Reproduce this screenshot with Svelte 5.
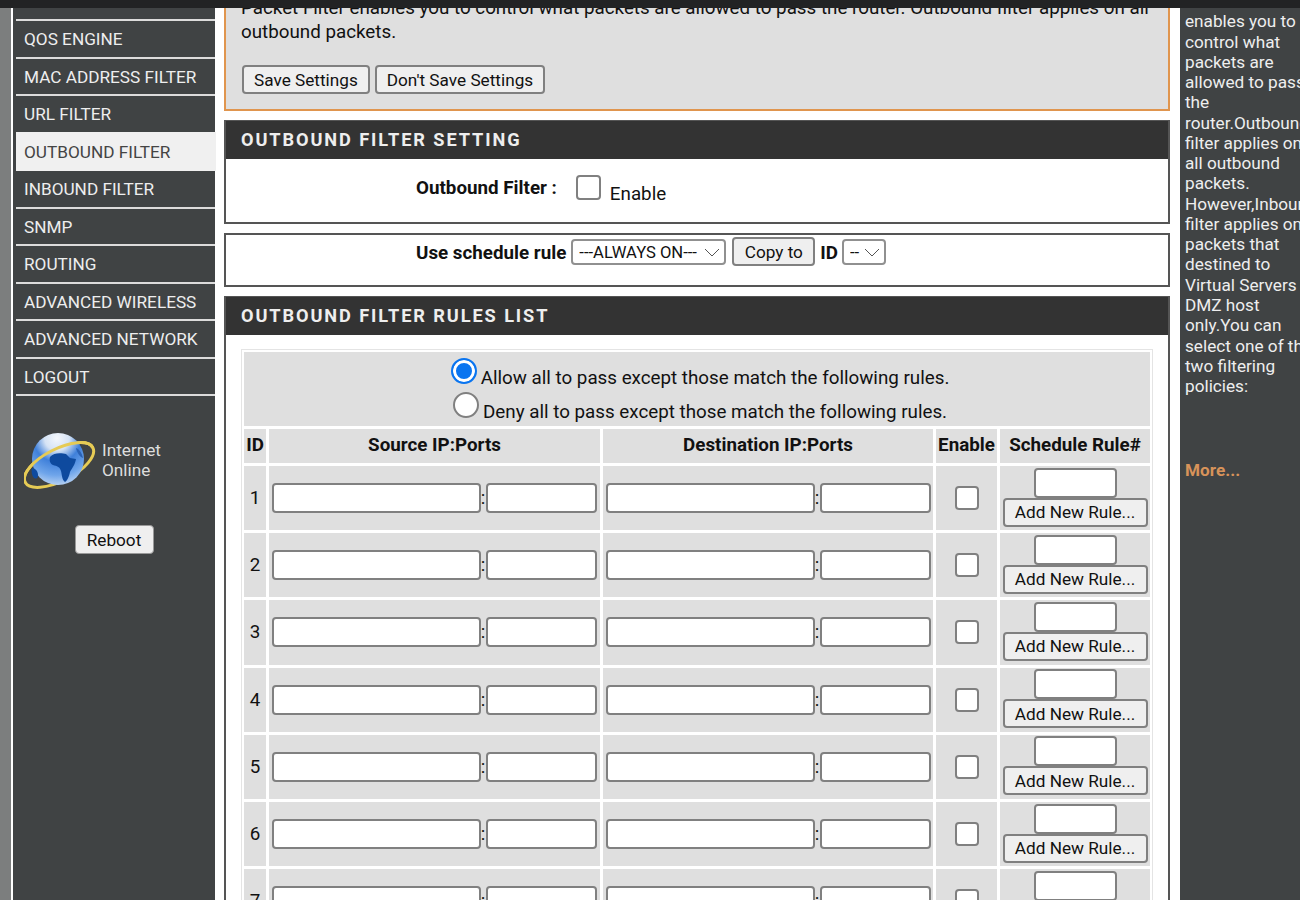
<script>
  const menu = ['', 'QOS ENGINE', 'MAC ADDRESS FILTER', 'URL FILTER', 'OUTBOUND FILTER', 'INBOUND FILTER', 'SNMP', 'ROUTING', 'ADVANCED WIRELESS', 'ADVANCED NETWORK', 'LOGOUT'];
  const rows = [1, 2, 3, 4, 5, 6, 7];
</script>

<div class="topbar"></div>
<div class="page">
  <div class="strip"></div>
  <nav class="sidebar">
    <ul class="menu">
      {#each menu as item}
        <li class:active={item === 'OUTBOUND FILTER'}>{item}</li>
      {/each}
    </ul>
    <div class="status">
      <svg class="globe" width="72" height="64" viewBox="0 0 72 64">
        <defs>
          <radialGradient id="sea" cx="0.48" cy="0.1" r="0.95">
            <stop offset="0" stop-color="#f4f7fb" />
            <stop offset="0.25" stop-color="#d5e3f5" />
            <stop offset="0.48" stop-color="#3f80da" />
            <stop offset="0.75" stop-color="#6fa5ea" />
            <stop offset="1" stop-color="#c5daf5" />
          </radialGradient>
          <clipPath id="upper">
            <rect x="-10" y="-10" width="100" height="43" />
          </clipPath>
        </defs>
        <g transform="rotate(-27 35 33)">
          <ellipse cx="35" cy="33" rx="38" ry="16" fill="none" stroke="#e6cb55" stroke-width="3" />
        </g>
        <circle cx="34" cy="27" r="26" fill="url(#sea)" />
        <path d="M26 25C30 20 38 21 42 22L46 26 52 27C51 33 48 36 46 40 45 45 43 49 41 50 38 48 38 43 37 39 36 35 33 34 29 33 26 32 25 28 26 25z" fill="#0e4a9e" />
        <path d="M8 36c3 0 6 3 6 7s-2 4-4 3c-2-2-3-6-2-10z" fill="#0e4a9e" />
        <path d="M52 16c3 1 6 5 7 10-3-1-6-5-7-10z" fill="#2a62b5" />
        <g transform="rotate(-27 35 33)">
          <ellipse cx="35" cy="33" rx="38" ry="16" fill="none" stroke="#e6cb55" stroke-width="3" clip-path="url(#upper)" />
        </g>
      </svg>
      <div class="online">Internet<br />Online</div>
    </div>
    <div class="reboot"><button>Reboot</button></div>
  </nav>

  <main class="content">
    <section class="intro">
      <p>Packet Filter enables you to control what packets are allowed to pass the router. Outbound filter applies on all outbound packets.</p>
      <div class="actions">
        <button>Save Settings</button>
        <button>Don't Save Settings</button>
      </div>
    </section>

    <section class="box">
      <h2>OUTBOUND FILTER SETTING</h2>
      <div class="setting">
        <b class="setting-label">Outbound Filter :</b>
        <input type="checkbox" class="check" />
        <span class="enable-text">Enable</span>
      </div>
    </section>

    <section class="box schedule">
      <b>Use schedule rule</b>
      <select class="sel-always"><option>---ALWAYS ON---</option></select>
      <button class="copy">Copy to</button>
      <b>ID</b>
      <select class="sel-id"><option>--</option></select>
    </section>

    <section class="box rules">
      <h2>OUTBOUND FILTER RULES LIST</h2>
      <div class="rules-body">
        <table>
          <colgroup>
            <col class="c-id" />
            <col class="c-src" />
            <col class="c-dst" />
            <col class="c-en" />
            <col class="c-sch" />
          </colgroup>
          <thead>
            <tr>
              <td colspan="5" class="policy">
                <div class="policy-line"><input type="radio" name="policy" checked /><span>Allow all to pass except those match the following rules.</span></div>
                <div class="policy-line"><input type="radio" name="policy" /><span>Deny all to pass except those match the following rules.</span></div>
              </td>
            </tr>
            <tr class="head">
              <th>ID</th>
              <th>Source IP:Ports</th>
              <th>Destination IP:Ports</th>
              <th>Enable</th>
              <th>Schedule Rule#</th>
            </tr>
          </thead>
          <tbody>
            {#each rows as n}
              <tr>
                <td class="num">{n}</td>
                <td><div class="ip"><input class="addr" type="text" /><span>:</span><input class="port" type="text" /></div></td>
                <td><div class="ip"><input class="addr" type="text" /><span>:</span><input class="port" type="text" /></div></td>
                <td class="center"><input type="checkbox" class="check" /></td>
                <td class="center sched">
                  <input class="sched-input" type="text" />
                  <button class="add">Add New Rule...</button>
                </td>
              </tr>
            {/each}
          </tbody>
        </table>
      </div>
    </section>
  </main>

  <aside class="hints">
    <p>Packet Filter enables you to control what packets are allowed to pass the router.Outbound filter applies on all&nbsp;outbound packets. However,Inbound filter applies on packets that destined to Virtual&nbsp;Servers&nbsp;or DMZ host only.You&nbsp;can select one of the two filtering policies:</p>
    <a class="more" href="#more">More...</a>
  </aside>
</div>

<style>
  :global(body) {
    margin: 0;
    background: #fff;
    overflow: hidden;
    font-family: Roboto, "Liberation Sans", sans-serif;
    color: #111;
  }

  .topbar {
    height: 8px;
    background: #222324;
  }

  .page {
    display: flex;
    height: 892px;
    overflow: hidden;
    background: #fff;
  }

  .strip {
    width: 11px;
    flex: none;
    background: #7c7e7e;
    margin-right: 2px;
  }

  .sidebar {
    width: 202px;
    flex: none;
    background: #404344;
    color: #eee;
  }

  .menu {
    list-style: none;
    margin: 0 0 0 3px;
    padding: 0;
    font-size: 17.2px;
  }

  .menu li {
    height: 35.5px;
    line-height: 37px;
    padding-left: 8px;
    border-bottom: 2px solid #dcdcdc;
    white-space: nowrap;
  }

  .menu li:first-child {
    height: 11px;
    line-height: 11px;
  }

  .menu li.active {
    background: #f0f0f0;
    color: #444;
    margin-right: -1px;
    margin-top: -2px;
    padding-top: 2px;
    border-bottom-color: #f0f0f0;
  }

  .status {
    display: flex;
    align-items: center;
    margin: 36px 0 0 11px;
  }

  .globe {
    flex: none;
    margin-right: 6px;
  }

  .online {
    font-size: 17.2px;
    line-height: 20.3px;
    color: #ddd;
    margin-top: -8px;
  }

  .reboot {
    text-align: center;
    margin: 29px 0 0 0;
  }

  .reboot button {
    width: 79px;
    height: 29px;
    padding: 0;
    border: 1px solid #999;
    background: #efefef;
  }

  .content {
    width: 946px;
    flex: none;
    margin: -12px 9px 0;
  }

  button {
    font-family: inherit;
    font-size: 17.2px;
    color: #111;
    background: #efefef;
    border: 2px solid #808080;
    border-radius: 4px;
    padding: 0 10px;
    height: 29px;
  }

  .intro {
    box-sizing: border-box;
    height: 115px;
    padding: 0 15px;
    background: #dfdfdf;
    border: 2px solid #e0954e;
    border-top: none;
    font-size: 18.8px;
    line-height: 24px;
  }

  .intro p {
    margin: 0;
  }

  .actions {
    display: flex;
    gap: 5px;
    margin: 21px 0 0 1px;
  }

  .box {
    box-sizing: border-box;
    margin-top: 9px;
    border: 2px solid #555;
    background: #fff;
  }

  h2 {
    margin: -1px 0 0;
    height: 38px;
    line-height: 38px;
    padding-left: 15px;
    background: #333;
    color: #eee;
    font-size: 18.2px;
    font-weight: 700;
    letter-spacing: 1.9px;
  }

  .setting {
    height: 63px;
    display: flex;
    align-items: flex-start;
    font-size: 18.8px;
  }

  .setting-label {
    margin: 18px 0 0 190px;
  }

  .setting .check {
    margin: 16px 0 0 19px;
  }

  .enable-text {
    margin: 24px 0 0 9px;
  }

  .check {
    appearance: none;
    width: 25px;
    height: 25px;
    margin: 0;
    background: #fff;
    border: 2px solid #808080;
    border-radius: 4px;
    box-sizing: border-box;
  }

  .schedule {
    height: 54px;
    display: flex;
    align-items: flex-start;
    gap: 5px;
    padding: 2px 0 0 190px;
    font-size: 18.8px;
  }

  .schedule b {
    margin-top: 5px;
  }

  .schedule select {
    margin-top: 2px;
  }

  .copy {
    width: 83px;
    padding: 0;
    margin-left: 1px;
  }

  select {
    appearance: none;
    font-family: inherit;
    font-size: 16.6px;
    color: #111;
    height: 26px;
    border: 2px solid #909090;
    border-radius: 4px;
    padding: 0 0 0 6px;
    background-color: #fff;
    background-image: linear-gradient(45deg, transparent 46%, #555 46%, #555 54%, transparent 54%), linear-gradient(-45deg, transparent 46%, #555 46%, #555 54%, transparent 54%);
    background-size: 7px 7px, 7px 7px;
    background-position: right 12px center, right 5px center;
    background-repeat: no-repeat;
  }

  .sel-always {
    width: 155px;
  }

  .sel-id {
    width: 44px;
    margin-left: -1px;
  }

  .rules-body {
    padding: 14px 15px 0;
  }

  table {
    width: 912px;
    table-layout: fixed;
    border-collapse: separate;
    border-spacing: 3px;
    outline: 1px solid #e4e4e4;
    outline-offset: -1px;
    font-size: 18.8px;
  }

  td,
  th {
    background: #dfdfdf;
    padding: 0;
  }

  .c-id {
    width: 22px;
  }

  .c-src {
    width: 331px;
  }

  .c-dst {
    width: 330px;
  }

  .c-en {
    width: 61px;
  }

  .c-sch {
    width: 150px;
  }

  .head th {
    height: 34px;
    padding-bottom: 3px;
    box-sizing: border-box;
    white-space: nowrap;
  }

  .policy {
    box-sizing: border-box;
    height: 74px;
    padding: 4px 0 0 6px;
  }

  .policy-line {
    display: flex;
    justify-content: center;
    align-items: flex-end;
    height: 34px;
    line-height: 24px;
  }

  .policy-line span {
    margin-left: 4px;
    margin-bottom: 1px;
  }

  input[type='radio'] {
    appearance: none;
    width: 26px;
    height: 26px;
    margin: 0 0 7px;
    box-sizing: border-box;
    background: #fff;
    border: 2px solid #808080;
    border-radius: 50%;
  }

  input[type='radio']:checked {
    background: #0a75f0;
    border: 2px solid #0a75f0;
    box-shadow: inset 0 0 0 3px #fff;
  }

  .num {
    text-align: center;
  }

  tbody tr {
    height: 64.2px;
  }

  .ip {
    display: flex;
    align-items: center;
    padding: 0 2.5px;
  }

  .ip span {
    width: 5px;
    text-align: center;
  }

  input[type='text'] {
    box-sizing: border-box;
    height: 30px;
    margin: 0;
    background: #fff;
    border: 2px solid #808080;
    border-radius: 4px;
  }

  .addr {
    width: 209px;
  }

  .port {
    width: 111px;
  }

  .center {
    text-align: center;
  }

  .center .check {
    display: block;
    margin: 0 auto;
    width: 24px;
    height: 24px;
  }

  .sched {
    padding-bottom: 2px;
    box-sizing: border-box;
  }

  .sched input {
    display: block;
    width: 83px;
    margin: 0 auto;
  }

  .add {
    display: block;
    width: 145px;
    height: 29px;
    padding: 0;
    margin: 0 auto;
  }

  .hints {
    flex: none;
    width: 119px;
    margin: -17px 0 0 1px;
    background: #404344;
    color: #eee;
    padding-left: 5px;
    font-size: 17.2px;
    line-height: 20.27px;
    overflow: hidden;
  }

  .hints p {
    margin: 0;
    width: 143px;
  }

  .more {
    display: block;
    margin-top: 64px;
    color: #d8935a;
    font-weight: 700;
    text-decoration: none;
  }
</style>
